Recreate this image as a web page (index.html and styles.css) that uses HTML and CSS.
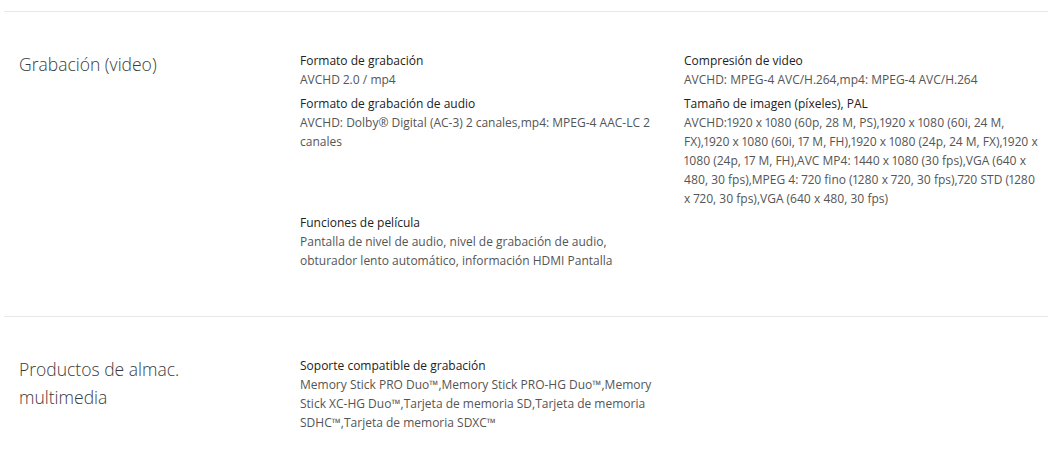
FILE: index.html
```html
<!DOCTYPE html>
<html lang="es">
<head>
<meta charset="utf-8">
<link rel="stylesheet" href="styles.css">
</head>
<body>
<div class="specs">
  <section class="spec-group">
    <h2 class="group-label">Grabación (video)</h2>
    <div class="group-items">
      <div class="item">
        <h3 class="item-title">Formato de grabación</h3>
        <p class="item-value">AVCHD 2.0 / mp4</p>
      </div>
      <div class="item">
        <h3 class="item-title">Compresión de video</h3>
        <p class="item-value">AVCHD: MPEG-4 AVC/H.264,mp4: MPEG-4 AVC/H.264</p>
      </div>
      <div class="item">
        <h3 class="item-title">Formato de grabación de audio</h3>
        <p class="item-value">AVCHD: Dolby® Digital (AC-3) 2 canales,mp4: MPEG-4 AAC-LC 2 canales</p>
      </div>
      <div class="item">
        <h3 class="item-title">Tamaño de imagen (píxeles), PAL</h3>
        <p class="item-value">AVCHD:1920 x 1080 (60p, 28 M, PS),1920 x 1080 (60i, 24 M, FX),1920 x 1080 (60i, 17 M, FH),1920 x 1080 (24p, 24 M, FX),1920 x 1080 (24p, 17 M, FH),AVC MP4: 1440 x 1080 (30 fps),VGA (640 x 480, 30 fps),MPEG 4: 720 fino (1280 x 720, 30 fps),720 STD (1280 x 720, 30 fps),VGA (640 x 480, 30 fps)</p>
      </div>
      <div class="item">
        <h3 class="item-title">Funciones de película</h3>
        <p class="item-value">Pantalla de nivel de audio, nivel de grabación de audio, obturador lento automático, información HDMI Pantalla</p>
      </div>
    </div>
  </section>
  <section class="spec-group">
    <h2 class="group-label">Productos de almac. multimedia</h2>
    <div class="group-items">
      <div class="item">
        <h3 class="item-title">Soporte compatible de grabación</h3>
        <p class="item-value">Memory Stick PRO Duo™,Memory Stick PRO-HG Duo™,Memory Stick XC-HG Duo™,Tarjeta de memoria SD,Tarjeta de memoria SDHC™,Tarjeta de memoria SDXC™</p>
      </div>
    </div>
  </section>
</div>
</body>
</html>
```
FILE: styles.css
```css
html, body {
  margin: 0;
  padding: 0;
  background: #fff;
}
body {
  font-family: "Open Sans", "Noto Sans", sans-serif;
  color: #333;
  overflow: hidden;
}
.specs {
  padding: 11px 0 0 4px;
}
.spec-group {
  display: grid;
  grid-template-columns: 296px 1fr;
  border-top: 1px solid #e8e8e8;
  padding: 40px 0 46px;
}
.group-label {
  margin: -2px 0 0;
  padding-left: 15px;
  font-size: 17.5px;
  font-weight: 300;
  line-height: 28px;
  color: #3a3a3a;
  width: 175px;
}
.group-items {
  display: grid;
  grid-template-columns: 384px 1fr;
  row-gap: 6px;
  align-items: start;
}
.item {
  padding-right: 28px;
}
.item:nth-child(even) {
  padding-right: 4px;
}
.item-title {
  margin: 0;
  font-size: 12px;
  font-weight: 400;
  line-height: 18px;
  color: #222;
}
.item-value {
  margin: 0;
  font-size: 12px;
  line-height: 19px;
  color: #555;
  font-variant-numeric: proportional-nums;
}
```
